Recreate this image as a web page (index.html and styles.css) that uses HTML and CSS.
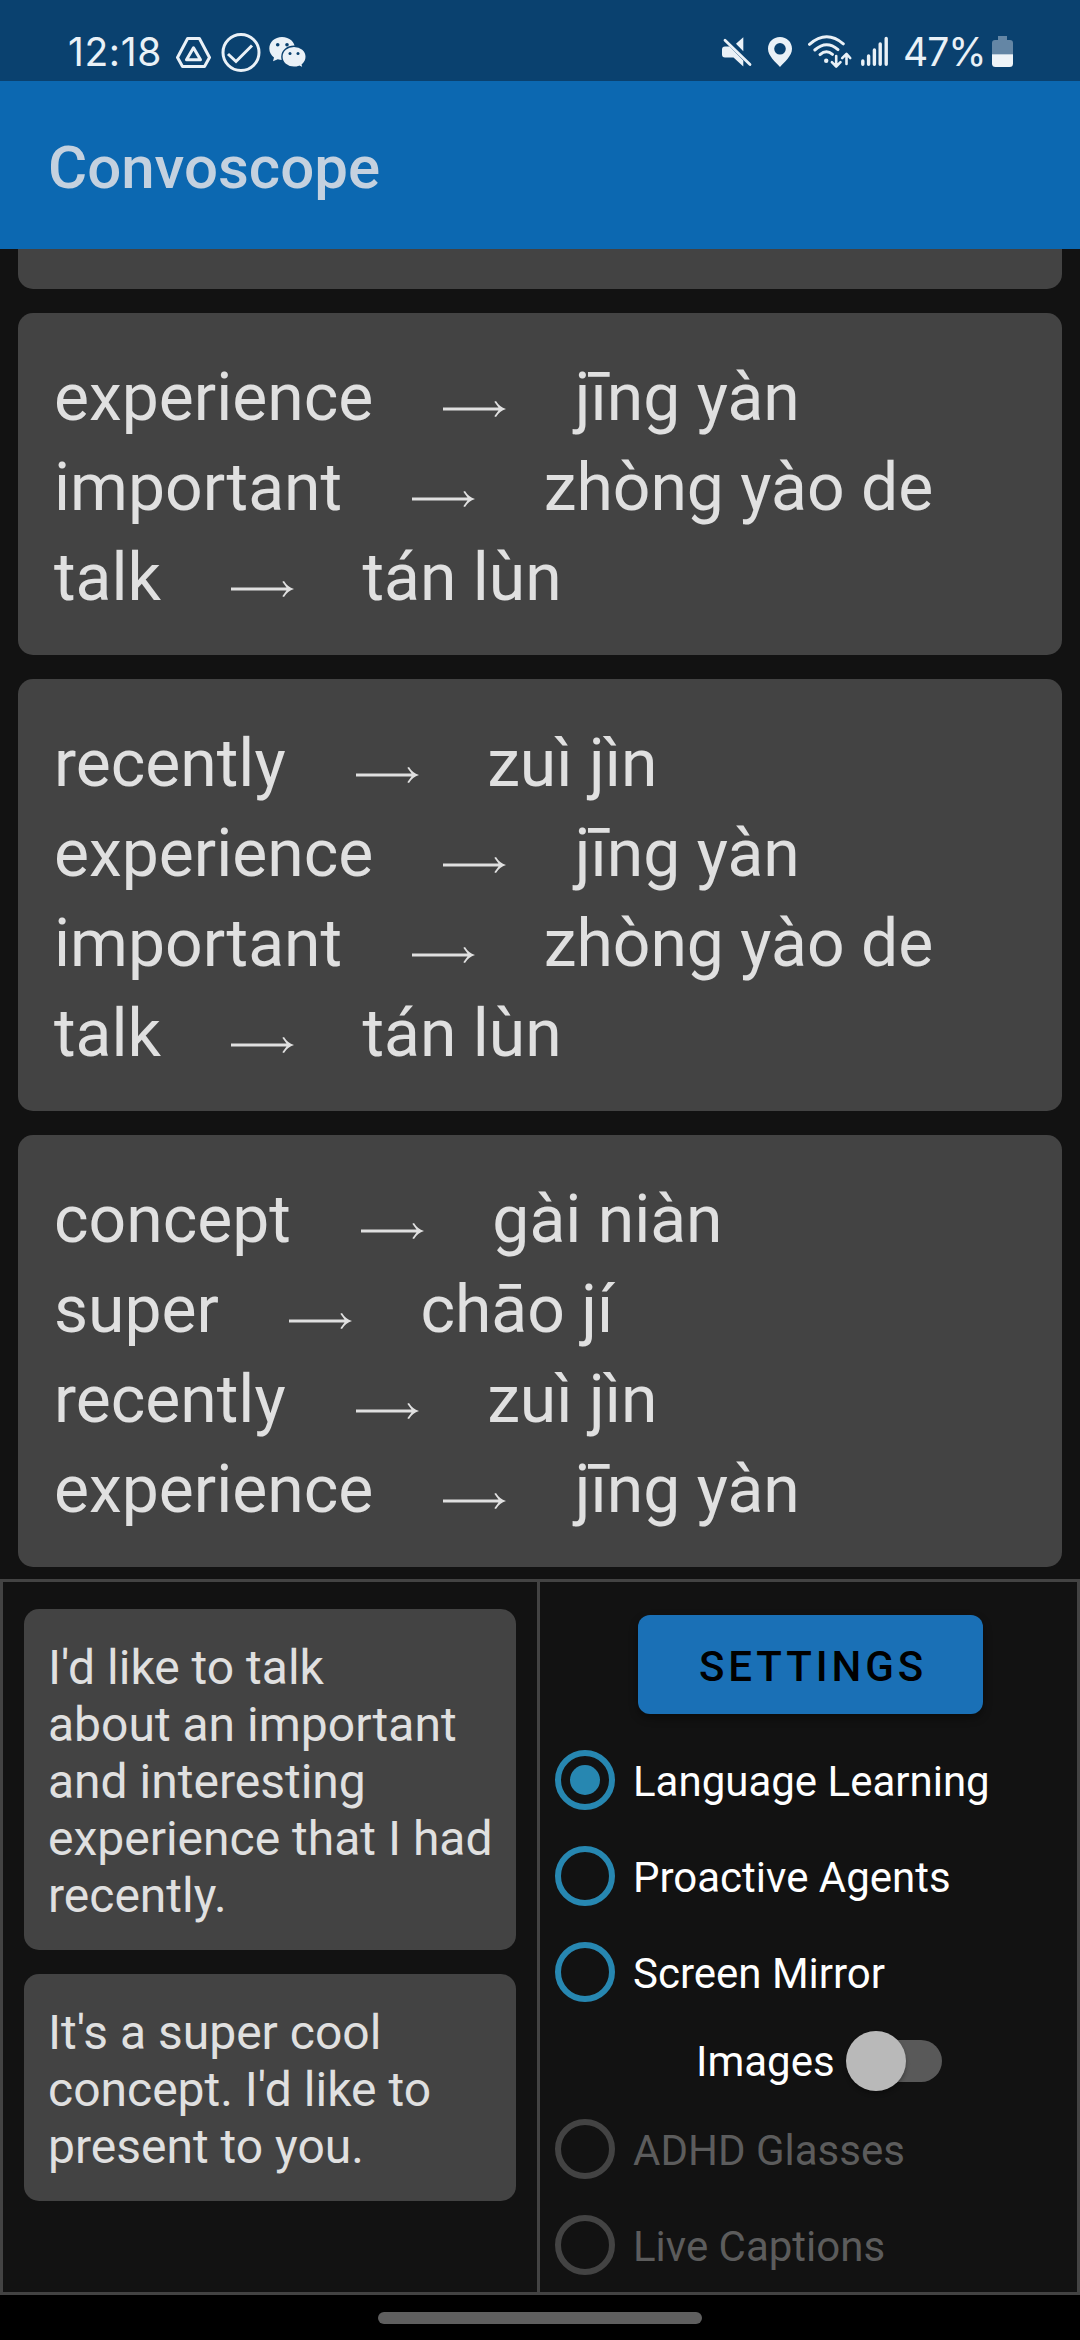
FILE: index.html
```html
<!DOCTYPE html>
<html lang="en">
<head>
<meta charset="utf-8">
<title>Convoscope</title>
<link rel="stylesheet" href="styles.css">
</head>
<body>
<svg class="defs" width="0" height="0" aria-hidden="true">
  <symbol id="arrow" viewBox="0 0 63 16">
    <path d="M0 6.6H55.5L51.3 0.8L53 0Q56.500 6 63 8Q56.500 10 53 16L51.300 15.200L55.500 9.400H0Z" fill="currentColor"/>
  </symbol>
</svg>
<div class="screen">
  <header class="status">
    <span class="clock">12:18</span>
    <svg class="ic drive" width="36" height="40" viewBox="176 32 36 40" fill="none" stroke="#eaf1f7" stroke-width="3" stroke-linejoin="round">
      <path d="M187.600 38.500H199.400L209.500 57.500L204.500 66.500H182.500L177.500 57.500Z"/>
      <path d="M193.500 47.800L200.500 59.800H186.500Z"/>
    </svg>
    <svg class="ic check" width="40" height="40" viewBox="220.500 32 40 40" fill="none" stroke="#eaf1f7" stroke-width="3">
      <circle cx="240.500" cy="52.500" r="18"/>
      <path d="M227.500 54L235.500 61.500L251.500 45.500"/>
    </svg>
    <svg class="ic wechat" width="38" height="40" viewBox="269 32 38 40" fill="#eaf1f7">
      <path d="M282 37C274.800 37 269.300 42 269.300 48.500C269.300 52.200 271.200 55.300 274 57.400L273 61.300L277.800 59.200Q279.800 60 282.600 60C290 60 295 55 295 48.500C295 42 289.500 37 282 37Z"/>
      <path d="M294 46.300C287.200 46.300 281.900 50.900 281.900 56.800C281.900 62.700 287.200 67.300 294 67.300Q296.800 67.300 299.200 66.300L303.400 68.200L302.300 64.700C304.700 62.800 306.200 60 306.200 56.800C306.200 50.900 300.900 46.300 294 46.300Z" stroke="#0a416f" stroke-width="1.400"/>
      <g fill="#0a416f"><circle cx="277.700" cy="44.800" r="1.800"/><circle cx="287" cy="44.800" r="1.800"/><circle cx="290" cy="53.500" r="1.500"/><circle cx="298" cy="53.500" r="1.500"/></g>
    </svg>
    <span class="spacer"></span>
    <svg class="ic mute" width="31" height="40" viewBox="721 32 31 40" fill="#eaf1f7">
      <path d="M736 43.700L743.300 37.200V51.200Z"/>
      <path d="M725 46.500H729.500L743.300 60.500V66.500L733.500 57.500H725Q722 57.500 722 54.500V49.500Q722 46.500 725 46.500Z"/>
      <path d="M725 40.300L750 64.600" stroke="#eaf1f7" stroke-width="2.800" stroke-linecap="round"/>
    </svg>
    <svg class="ic pin" width="26" height="40" viewBox="767 32 26 40" fill="#eaf1f7">
      <path fill-rule="evenodd" d="M780 37C773.100 37 768 42.100 768 48.800C768 56 775.500 62 780 67C784.500 62 792 56 792 48.800C792 42.100 786.900 37 780 37ZM780 43A5.800 5.800 0 1 1 780 54.600A5.800 5.800 0 1 1 780 43Z"/>
    </svg>
    <svg class="ic wifi" width="46" height="40" viewBox="807 32 46 40" fill="none" stroke="#eaf1f7" stroke-width="3" stroke-linecap="round">
      <path d="M809.500 44.300Q826.500 29.500 843.300 43.800"/>
      <path d="M814.800 50Q826.500 39.700 838 49.600"/>
      <path d="M820 54.600Q826.300 49 832.500 54.300"/>
      <circle cx="826.200" cy="60.700" r="2.200" fill="#eaf1f7" stroke="none"/>
      <path d="M836.200 56V66M831.900 62.200L836.200 66.500L840.500 62.200M846.500 64V54.500M842.200 58.200L846.500 53.900L850.200 58" stroke-width="2.600" stroke-linejoin="round"/>
    </svg>
    <svg class="ic signal" width="28" height="40" viewBox="861 32 28 40" stroke="#eaf1f7" stroke-width="3.400" stroke-linecap="round">
      <path d="M862.800 61V64.300M868.600 56V64.300M874.400 50V64.300M880.200 44V64.300M886.200 38.500V64.300"/>
    </svg>
    <span class="percent">47%</span>
    <svg class="ic battery" width="22" height="40" viewBox="992 32 22 40">
      <path d="M998 36H1007V40H1010Q1013 40 1013 43V54.500H992V43Q992 40 995 40H998Z" fill="#6486a5"/>
      <path d="M992 54.300H1013V63.500Q1013 67 1009.500 67H995.500Q992 67 992 63.500Z" fill="#eff4f8"/>
    </svg>
  </header>
  <div class="appbar"><h1>Convoscope</h1></div>

  <main class="feed">
    <section class="card card-cut"></section>
    <section class="card">
      <div class="row"><span>experience</span><svg class="arrow"><use href="#arrow"/></svg><span>jīng yàn</span></div>
      <div class="row"><span>important</span><svg class="arrow"><use href="#arrow"/></svg><span>zhòng yào de</span></div>
      <div class="row"><span>talk</span><svg class="arrow"><use href="#arrow"/></svg><span>tán lùn</span></div>
    </section>
    <section class="card">
      <div class="row"><span>recently</span><svg class="arrow"><use href="#arrow"/></svg><span>zuì jìn</span></div>
      <div class="row"><span>experience</span><svg class="arrow"><use href="#arrow"/></svg><span>jīng yàn</span></div>
      <div class="row"><span>important</span><svg class="arrow"><use href="#arrow"/></svg><span>zhòng yào de</span></div>
      <div class="row"><span>talk</span><svg class="arrow"><use href="#arrow"/></svg><span>tán lùn</span></div>
    </section>
    <section class="card">
      <div class="row"><span>concept</span><svg class="arrow"><use href="#arrow"/></svg><span>gài niàn</span></div>
      <div class="row"><span>super</span><svg class="arrow"><use href="#arrow"/></svg><span>chāo jí</span></div>
      <div class="row"><span>recently</span><svg class="arrow"><use href="#arrow"/></svg><span>zuì jìn</span></div>
      <div class="row"><span>experience</span><svg class="arrow"><use href="#arrow"/></svg><span>jīng yàn</span></div>
    </section>
  </main>

  <div class="panel">
    <div class="transcript">
      <p class="quote">I'd like to talk<br>about an important<br>and interesting<br>experience that I had<br>recently.</p>
      <p class="quote">It's a super cool<br>concept. I'd like to<br>present to you.</p>
    </div>
    <div class="controls">
      <button class="settings" type="button">SETTINGS</button>
      <div class="option"><span class="radio checked"></span><span>Language Learning</span></div>
      <div class="option"><span class="radio"></span><span>Proactive Agents</span></div>
      <div class="option"><span class="radio"></span><span>Screen Mirror</span></div>
      <div class="toggle"><span>Images</span><span class="track"><span class="thumb"></span></span></div>
      <div class="option disabled"><span class="radio"></span><span>ADHD Glasses</span></div>
      <div class="option disabled"><span class="radio"></span><span>Live Captions</span></div>
    </div>
  </div>
  <footer class="nav"><span class="handle"></span></footer>
</div>
</body>
</html>
```

FILE: styles.css
```css
* { box-sizing: border-box; }
body { margin: 0; background: #000; font-family: Roboto, "Noto Sans", sans-serif; }
.defs { display: block; position: absolute; }
.screen { width: 1080px; height: 2340px; display: flex; flex-direction: column; overflow: hidden; background: #121212; }

.status { flex: none; height: 81px; padding: 32px 66px 0 68px; display: flex; background: #0a416f; color: #eaf1f7; font-family: Inter, Roboto, sans-serif; font-size: 39px; line-height: 40px; }
.ic { flex: none; display: block; }
.clock { width: 93px; letter-spacing: .6px; white-space: nowrap; }
.drive { margin-left: 15px; }
.check { margin-left: 8.5px; }
.wechat { margin-left: 8.5px; }
.spacer { flex: 1; }
.pin { margin-left: 15px; }
.wifi { margin-left: 14px; }
.signal { margin-left: 8px; }
.percent { width: 83px; margin-left: 14px; white-space: nowrap; letter-spacing: -1px; }
.battery { margin-left: 6px; }

.appbar { flex: none; height: 168px; padding: 5px 48px 0; display: flex; align-items: center; background: #0c68b1; }
.appbar h1 { margin: 0; font-size: 60px; line-height: 72px; font-weight: 500; color: #c4d1df; }

.feed { flex: none; height: 1330px; padding: 0 18px; display: flex; flex-direction: column; gap: 24px; }
.card { padding: 40px 36px 32px; border-radius: 15px; background: #434343; color: #e0e0e0; font-size: 66px; }
.card-cut { height: 40px; padding: 0; border-radius: 0 0 15px 15px; }
.row { display: flex; height: 90px; line-height: 90px; white-space: pre; }
.arrow { flex: none; width: 63px; height: 16px; margin: 48px 68.500px 0 70px; }

.panel { flex: none; height: 716px; display: grid; grid-template-columns: 537px 1fr; border: 3px solid #434343; }
.transcript { padding: 27px 21px; border-right: 3px solid #434343; display: flex; flex-direction: column; gap: 24px; }
.quote { margin: 0; padding: 30px 24px 26px; border-radius: 15px; background: #434343; color: #e0e0e0; font-size: 48px; line-height: 57px; white-space: nowrap; }
.controls { padding: 33px 0 0; display: flex; flex-direction: column; color: #fff; font-size: 42px; line-height: 50px; }
.settings { align-self: center; width: 345px; height: 99px; margin: 0 0 18px 3px; padding: 4px 0 0 6px; border: 0; border-radius: 12px; background: #1a70b6; color: #000; font: 500 42px/50px Roboto, sans-serif; letter-spacing: 3.900px; box-shadow: 0 4px 8px rgba(0, 0, 0, .4); }
.option { height: 96px; padding-left: 15px; display: flex; align-items: center; gap: 18px; }
.option span:last-child { padding-top: 3px; }
.radio { flex: none; width: 60px; height: 60px; border: 6px solid #2787b1; border-radius: 50%; display: grid; place-items: center; }
.checked::before { content: ""; width: 30px; height: 30px; border-radius: 50%; background: #2787b1; }
.disabled { color: #5c5c5c; }
.disabled .radio { border-color: #434343; }
.toggle { height: 81px; padding-left: 156px; display: flex; align-items: center; gap: 15px; }
.toggle > span:first-child { padding-top: 3px; width: 138px; }
.track { width: 93px; height: 42px; border-radius: 21px; background: #595959; display: flex; align-items: center; }
.thumb { flex: none; width: 60px; height: 60px; margin-left: -3px; border-radius: 50%; background: #b9b9b9; box-shadow: 0 3px 4px rgba(0, 0, 0, .3); }

.nav { flex: 1; display: flex; justify-content: center; align-items: flex-start; padding-top: 17px; background: #000; }
.handle { width: 324px; height: 12px; border-radius: 6px; background: #5f5f5f; }
```
